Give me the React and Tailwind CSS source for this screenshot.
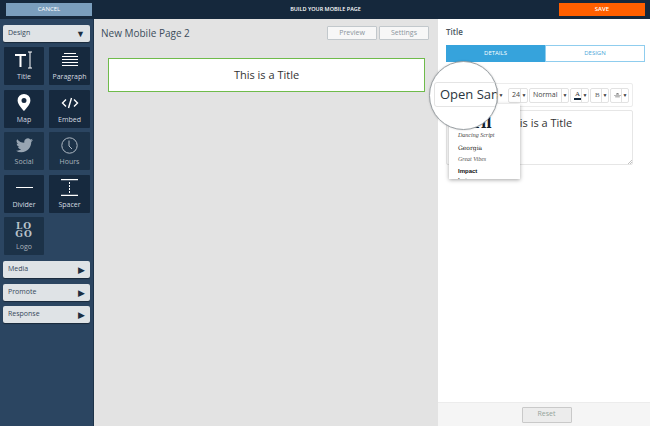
import React from 'react'

const TitleIcon = () => (
  <svg width="20" height="18" viewBox="0 0 20 18" fill="none">
    <path d="M1 3h11v2H7.500v11h-2V5H1z" fill="#fff" />
    <path d="M14 1h4M14 17h4M16 1v16" stroke="#fff" strokeWidth="1" />
  </svg>
)
const ParagraphIcon = () => (
  <svg width="18" height="16" viewBox="0 0 18 16" stroke="#fff" strokeWidth="1">
    <path d="M3 1.500h12M1 4.500h16M1 7.500h16M1 10.500h16M1 13.500h16" />
  </svg>
)
const MapIcon = () => (
  <svg width="14" height="17" viewBox="0 0 14 17">
    <path fillRule="evenodd" d="M7 0a6.400 6.400 0 0 1 6.400 6.400C13.400 10.500 7 17 7 17S.6 10.500.6 6.400A6.400 6.400 0 0 1 7 0zm0 4a2.500 2.500 0 1 0 0 5 2.500 2.500 0 0 0 0-5z" fill="#fff" />
  </svg>
)
const EmbedIcon = () => (
  <svg width="18" height="12" viewBox="0 0 18 12" fill="none" stroke="#fff" strokeWidth="1.400">
    <path d="M5 2.500L1.500 6 5 9.500M13 2.500L16.500 6 13 9.500M10.500 1L7.500 11" />
  </svg>
)
const TwitterIcon = () => (
  <svg width="17" height="15" viewBox="0 0 24 20">
    <path d="M24 2.400a9.800 9.800 0 0 1-2.800.8A4.900 4.900 0 0 0 23.300.500a9.800 9.800 0 0 1-3.100 1.200 4.900 4.900 0 0 0-8.400 4.500A14 14 0 0 1 1.700 1a4.900 4.900 0 0 0 1.500 6.600 4.900 4.900 0 0 1-2.200-.6c0 2.400 1.700 4.400 3.900 4.900a4.900 4.900 0 0 1-2.200.1 4.900 4.900 0 0 0 4.600 3.400A9.900 9.900 0 0 1 0 17.400 14 14 0 0 0 7.500 19.600c9.100 0 14.300-7.700 14-14.600A10 10 0 0 0 24 2.400z" fill="#98a5b2" />
  </svg>
)
const ClockIcon = () => (
  <svg width="17" height="17" viewBox="0 0 17 17" fill="none" stroke="#aeb8c2" strokeWidth="1">
    <circle cx="8.500" cy="8.500" r="7.700" />
    <path d="M8 3.500V9l3 3" />
  </svg>
)
const DividerIcon = () => (
  <svg width="17" height="3" viewBox="0 0 17 3" stroke="#fff" strokeWidth="1">
    <path d="M0 1.500h17" />
  </svg>
)
const SpacerIcon = () => (
  <svg width="17" height="17" viewBox="0 0 17 17" fill="none" stroke="#fff">
    <path d="M0 .700h17M0 16.300h17" strokeWidth="1.200" />
    <path d="M8.500 3v11" strokeDasharray="2 1" />
  </svg>
)

const tools = [
  { name: 'Title', icon: <TitleIcon /> },
  { name: 'Paragraph', icon: <ParagraphIcon /> },
  { name: 'Map', icon: <MapIcon /> },
  { name: 'Embed', icon: <EmbedIcon /> },
  { name: 'Social', icon: <TwitterIcon />, dim: true },
  { name: 'Hours', icon: <ClockIcon />, dim: true },
  { name: 'Divider', icon: <DividerIcon /> },
  { name: 'Spacer', icon: <SpacerIcon /> },
  {
    name: 'Logo',
    dim: true,
    icon: (
      <div className="font-['DejaVu_Serif',serif] font-bold text-[9px] leading-[8px] tracking-[1px] text-[#b9c2ca] text-center">
        LO<br />GO
      </div>
    ),
  },
]

const Caret = () => <span className="text-[5px] leading-none text-[#333]">▼</span>

const SideButton = ({ label, down }) => (
  <div className="h-[17px] mx-[3px] bg-[#dfe3e6] rounded-[2px] flex items-center justify-between pl-[5px] pr-[5px] text-[7px] text-[#35485a] shadow-[0_1px_1px_rgba(0,0,0,0.4)]">
    <span>{label}</span>
    <span className="text-[9px] leading-none text-[#1c2f42]">{down ? '▼' : '▶'}</span>
  </div>
)

const ToolSelect = ({ className, children }) => (
  <div className={`h-[15px] flex items-stretch border border-[#e2e2e2] rounded-[2px] ${className}`}>
    <div className="flex-1 flex items-center pl-[3px] text-[7px] text-[#444] overflow-hidden">{children}</div>
    <div className="w-[7px] border-l border-[#e2e2e2] flex items-center justify-center"><Caret /></div>
  </div>
)

const App = () => {
  return (
    <div className="w-[650px] h-[426px] overflow-hidden flex flex-col font-['Open_Sans',sans-serif] bg-white">
      <header className="h-[19px] shrink-0 bg-[#15283c] flex items-center justify-between pl-[6px] pr-[5px]">
        <button className="w-[86px] h-[13px] bg-[#7a9ebd] text-white text-[6px]">CANCEL</button>
        <span className="text-white text-[5.500px] font-semibold">BUILD YOUR MOBILE PAGE</span>
        <button className="w-[86px] h-[13px] bg-[#ff5f00] text-white text-[6px] font-semibold">SAVE</button>
      </header>

      <div className="flex-1 flex min-h-0">
        <aside className="w-[94px] shrink-0 bg-[#2b4561] pt-[6px] border-r border-[#1d3349]">
          <SideButton label="Design" down />
          <div className="grid grid-cols-[40px_41px] gap-x-[5px] gap-y-[4.500px] pl-[4px] mt-[5px]">
            {tools.map((tool) => (
              <div key={tool.name} className={`h-[38px] rounded-[1px] flex flex-col items-center ${tool.dim ? 'bg-[#1c3248]' : 'bg-[#16293e]'}`}>
                <div className="h-[24px] flex items-center justify-center mt-[1px]">{tool.icon}</div>
                <span className={`text-[7px] leading-[9px] ${tool.dim ? 'text-[#aab4bd]' : 'text-[#d5dbe0]'}`}>{tool.name}</span>
              </div>
            ))}
          </div>
          <div className="flex flex-col gap-[5.500px] mt-[6px]">
            <SideButton label="Media" />
            <SideButton label="Promote" />
            <SideButton label="Response" />
          </div>
        </aside>

        <main className="w-[344px] shrink-0 bg-[#e3e3e3] pl-[7px] pr-[9px]">
          <div className="flex items-center justify-between pt-[7px]">
            <h1 className="text-[10px] leading-[14px] text-[#3d4d5c]">New Mobile Page 2</h1>
            <div className="flex gap-[2px]">
              <button className="w-[50px] h-[14px] bg-white/70 border border-[#c2c8cc] rounded-[1px] text-[7px] text-[#8a949c]">Preview</button>
              <button className="w-[50px] h-[14px] bg-white/70 border border-[#c2c8cc] rounded-[1px] text-[7px] text-[#8a949c]">Settings</button>
            </div>
          </div>
          <div className="ml-[7px] mr-[4px] mt-[18px] h-[34px] bg-white border-[1.500px] border-[#6fbb4b] flex items-center justify-center text-[11px] text-[#333]">
            This is a Title
          </div>
        </main>

        <section className="flex-1 flex flex-col relative">
          <div className="flex-1 pl-[8px] pr-[5px] pt-[7px]">
            <h2 className="text-[8px] font-semibold leading-[12px] text-[#4a5560]">Title</h2>
            <div className="flex h-[17px] mt-[7px]">
              <div className="w-[99px] bg-[#36a3dc] flex items-center justify-center text-[6px] text-white">DETAILS</div>
              <div className="flex-1 border border-[#8fcdee] flex items-center justify-center text-[6px] text-[#4aa6d8]">DESIGN</div>
            </div>
            <div className="mt-[21px] w-[187px] h-[24px] border border-[#ececec] rounded-[2px] flex items-center justify-end gap-[1px] pr-[3px]">
              <div className="w-[7px] h-[15px] border-l border-[#e2e2e2] mr-[3px] flex items-center justify-center"><Caret /></div>
              <ToolSelect className="w-[20px]">24</ToolSelect>
              <ToolSelect className="w-[40px]">Normal</ToolSelect>
              <ToolSelect className="w-[19px]">
                <span className="border-b-2 border-[#15283c] leading-[8px] px-[1px] font-['Liberation_Serif',serif] text-[#333]">A</span>
              </ToolSelect>
              <ToolSelect className="w-[19px]">
                <span className="font-['Liberation_Serif',serif] text-[#666] pl-[1px]">B</span>
              </ToolSelect>
              <ToolSelect className="w-[19px]">
                <svg width="9" height="8" viewBox="0 0 9 8" fill="#777">
                  <path d="M2.500 3.500a2 2 0 0 1 4 0zM0 4h9v.8H0zM1.500 6h6v.8h-6z" />
                </svg>
              </ToolSelect>
            </div>
            <div className="mt-[3px] w-[187px] h-[55px] border border-[#e6e6e6] rounded-[2px] pl-[60px] pt-[5px] text-[11px] leading-[14px] text-[#333] relative">
              This is a Title
              <svg width="5" height="5" viewBox="0 0 5 5" stroke="#999" strokeWidth="0.600" className="absolute right-0 bottom-0">
                <path d="M1 5l4-4M3 5l2-2" />
              </svg>
            </div>
          </div>
          <footer className="h-[24px] shrink-0 bg-[#f5f5f5] border-t border-[#ececec] flex justify-center items-center pl-[5px]">
            <button className="w-[50px] h-[16px] bg-[#ececec] border border-[#c9c9c9] rounded-[1px] text-[7px] text-[#94a39a]">Reset</button>
          </footer>

          {/* font dropdown and magnifier sit on top of the toolbar */}
          <div className="absolute left-[11px] top-[85px] w-[71px] h-[75px] bg-white shadow-[0_1px_4px_rgba(0,0,0,0.35)] overflow-hidden pl-[9px]">
            <div className="mt-[13px] h-[11px] font-['DejaVu_Serif',serif] font-bold text-[14px] leading-[12px] text-[#15202b] -ml-[5px]">Abril</div>
            <div className="mt-[2px] h-[11px] italic font-['Liberation_Serif',serif] text-[6px] leading-[11px] text-[#444]">Dancing Script</div>
            <div className="mt-[1px] h-[12px] font-['DejaVu_Serif',serif] text-[6px] leading-[12px] text-[#222]">Georgia</div>
            <div className="h-[11px] italic font-['Liberation_Serif',serif] text-[6px] leading-[11px] text-[#555]">Great Vibes</div>
            <div className="h-[12px] font-['Liberation_Sans',sans-serif] font-bold text-[6px] leading-[12px] text-[#111]">Impact</div>
            <div className="font-['Liberation_Sans',sans-serif] font-bold text-[6px] leading-[6px] text-[#444]">Lato</div>
          </div>
          <div className="absolute left-[-9px] top-[42px] w-[69px] h-[69px] rounded-full bg-white border border-[#9aa0a4] overflow-hidden shadow-[0_0_2px_rgba(0,0,0,0.2)]">
            <div className="absolute left-[4px] top-[20px] w-[90px] h-[25px] border border-[#e4e4e4] rounded-[3px] pl-[5px] text-[13px] leading-[23px] text-[#2a3540] whitespace-nowrap">
              Open Sans
            </div>
          </div>
        </section>
      </div>
    </div>
  )
}

export default App
